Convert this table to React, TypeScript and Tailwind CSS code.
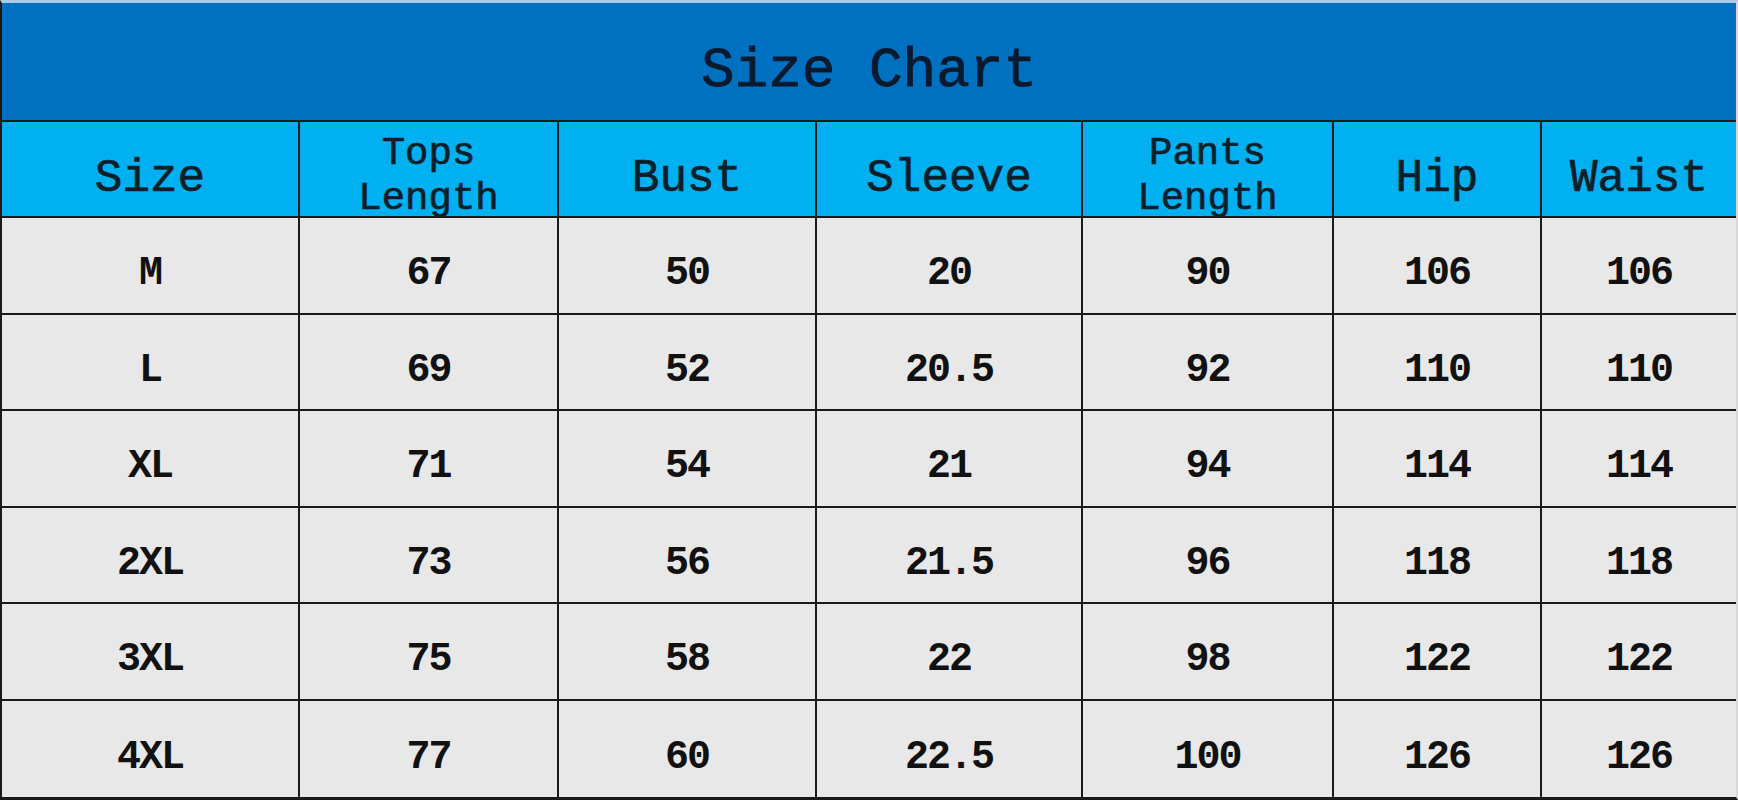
import React from 'react';

const COLS = 'grid-cols-[298px_259px_258px_266px_251px_208px_1fr]';

const HEADERS: { label: string[]; small?: boolean }[] = [
  { label: ['Size'] },
  { label: ['Tops', 'Length'], small: true },
  { label: ['Bust'] },
  { label: ['Sleeve'] },
  { label: ['Pants', 'Length'], small: true },
  { label: ['Hip'] },
  { label: ['Waist'] },
];

const ROWS = [
  ['M', '67', '50', '20', '90', '106', '106'],
  ['L', '69', '52', '20.5', '92', '110', '110'],
  ['XL', '71', '54', '21', '94', '114', '114'],
  ['2XL', '73', '56', '21.5', '96', '118', '118'],
  ['3XL', '75', '58', '22', '98', '122', '122'],
  ['4XL', '77', '60', '22.5', '100', '126', '126'],
];

export default function App() {
  return (
    <div className="w-[1738px] h-[800px] bg-white font-['Liberation_Mono',monospace] overflow-hidden">
      <div className="h-full border-t-[3px] border-t-[#a9cbe8] border-l-2 border-l-[#1a1a1a] border-b-[3px] border-b-[#1a1a1a] border-r-2 border-r-[#d8d8d8] flex flex-col">
        {/* title */}
        <div className="h-[119px] shrink-0 bg-[#0070c0] border-b-2 border-[#1a1a1a] flex items-center justify-center pt-[18px]">
          <h1 className="text-[56px] leading-none text-[#0a1a2e] [-webkit-text-stroke:0.8px_#0a1a2e]">Size Chart</h1>
        </div>

        {/* header row */}
        <div className={`grid ${COLS} h-[96px] shrink-0 bg-[#00b0f0]`}>
          {HEADERS.map((h, i) => (
            <div
              key={i}
              className={`border-b-2 border-[#1a1a1a] overflow-hidden text-[#0b1f2a] [-webkit-text-stroke:0.7px_#0b1f2a] ${i < 6 ? 'border-r-2' : ''} ${
                h.small
                  ? 'flex flex-col items-center justify-start pt-[10px] text-[39px] leading-[45px]'
                  : 'flex items-center justify-center pt-[20px] text-[46px] leading-none'
              }`}
            >
              {h.label.map((l) => (
                <span key={l}>{l}</span>
              ))}
            </div>
          ))}
        </div>

        {/* data rows */}
        <div className="flex-1 grid grid-rows-6 bg-[#e8e8e8]">
          {ROWS.map((row, r) => (
            <div key={r} className={`grid ${COLS}`}>
              {row.map((v, c) => (
                <div
                  key={c}
                  className={`flex items-center justify-center pt-[18px] text-[40px] font-bold leading-none text-[#111] tracking-[-2px] ${
                    c < 6 ? 'border-r-2 border-[#1a1a1a]' : ''
                  } ${r < 5 ? 'border-b-2 border-b-[#1a1a1a]' : ''}`}
                >
                  {v}
                </div>
              ))}
            </div>
          ))}
        </div>
      </div>
    </div>
  );
}
